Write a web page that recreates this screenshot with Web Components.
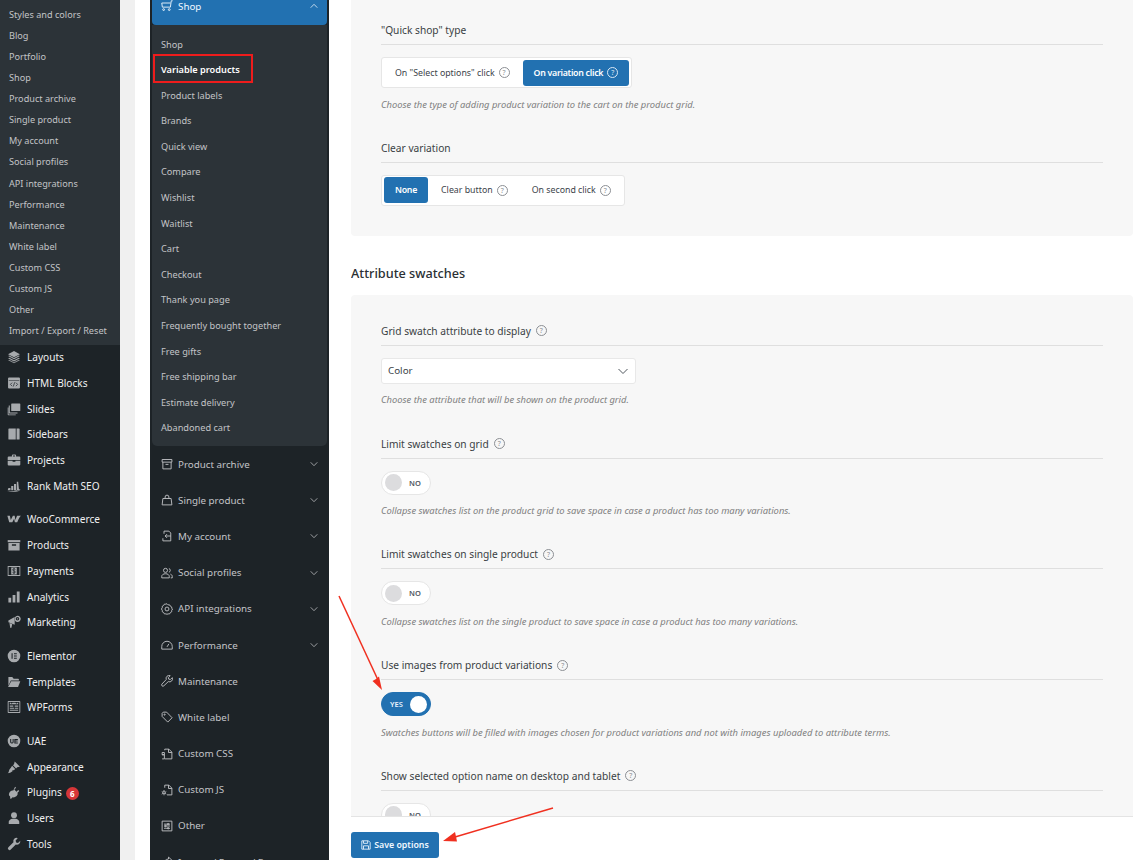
<!DOCTYPE html>
<html lang="en"><head><meta charset="utf-8"><title>Theme settings</title>
<style>
html,body{margin:0;padding:0;height:860px;overflow:hidden;background:#fff}
body{font-family:"Noto Sans","Open Sans",sans-serif;position:relative}
app-shell{height:860px}
</style></head>
<body>
<app-shell>
  <wp-menu slot="menu"></wp-menu>
  <theme-nav slot="nav"></theme-nav>
  <options-main slot="main">
    <opt-panel first>
      <opt-setting label="&quot;Quick shop&quot; type" desc="Choose the type of adding product variation to the cart on the product grid.">
        <seg-group options="On &quot;Select options&quot; click?|*On variation click?"></seg-group>
      </opt-setting>
      <opt-setting label="Clear variation">
        <seg-group options="*None|Clear button?|On second click?"></seg-group>
      </opt-setting>
    </opt-panel>
    <opt-heading>Attribute swatches</opt-heading>
    <opt-panel>
      <opt-setting label="Grid swatch attribute to display" help desc="Choose the attribute that will be shown on the product grid.">
        <opt-select value="Color"></opt-select>
      </opt-setting>
      <opt-setting label="Limit swatches on grid" help desc="Collapse swatches list on the product grid to save space in case a product has too many variations.">
        <opt-toggle></opt-toggle>
      </opt-setting>
      <opt-setting label="Limit swatches on single product" help desc="Collapse swatches list on the single product to save space in case a product has too many variations.">
        <opt-toggle></opt-toggle>
      </opt-setting>
      <opt-setting label="Use images from product variations" help desc="Swatches buttons will be filled with images chosen for product variations and not with images uploaded to attribute terms.">
        <opt-toggle on></opt-toggle>
      </opt-setting>
      <opt-setting label="Show selected option name on desktop and tablet" help>
        <opt-toggle></opt-toggle>
      </opt-setting>
    </opt-panel>
  </options-main>
</app-shell>
<annotation-layer></annotation-layer>
<script>
const def=(name,css,html)=>{customElements.define(name,class extends HTMLElement{
  constructor(){super();this.attachShadow({mode:'open'});}
  connectedCallback(){const h=typeof html==='function'?html(this):html;this.shadowRoot.innerHTML='<style>'+css+'</style>'+h;}
});};
const esc=s=>s.replace(/&/g,'&amp;').replace(/</g,'&lt;').replace(/"/g,'&quot;');

const W={
layouts:'<path d="M10 1.5 18.5 6 10 10.5 1.5 6z"/><path d="M1.5 8.600 3.400 7.700 10 11.300 16.600 7.700 18.500 8.600 10 13.200z"/><path d="M1.500 11.800 3.400 10.900 10 14.500 16.600 10.900 18.500 11.800 10 16.400z"/><path d="M1.500 14.800 3.400 13.900 10 17.500 16.600 13.900 18.500 14.800 10 19z" opacity=".8"/>',
html:'<path fill-rule="evenodd" d="M3 2h14a1.500 1.500 0 0 1 1.500 1.500v13A1.500 1.500 0 0 1 17 18H3a1.500 1.500 0 0 1-1.500-1.500v-13A1.500 1.500 0 0 1 3 2zM2.500 6v.8h15V6z"/><path d="M7.300 9.500 4.800 12l2.500 2.500M12.700 9.500l2.500 2.500-2.500 2.500M11 9l-2 6" fill="none" stroke="#1d2327" stroke-width="1"/>',
slides:'<path d="M7 2h11a1 1 0 0 1 1 1v9a1 1 0 0 1-1 1H7a1 1 0 0 1-1-1V3a1 1 0 0 1 1-1z"/><path d="M4 5v9.500a.5.5 0 0 0 .5.5H15v1.500H3.500A1.500 1.500 0 0 1 2.500 15.500V5z"/><path d="M1 8v10a1 1 0 0 0 1 1h10.500v-1.300H2.300V8z"/>',
sidebars:'<path d="M3 2h9.500v16H3a1 1 0 0 1-1-1V3a1 1 0 0 1 1-1zM13.700 2H17a1 1 0 0 1 1 1v14a1 1 0 0 1-1 1h-3.300z"/>',
projects:'<path fill-rule="evenodd" d="M7 5V3.500A1.500 1.500 0 0 1 8.500 2h3A1.500 1.500 0 0 1 13 3.500V5h4.500A1.500 1.500 0 0 1 19 6.500V10H1V6.500A1.500 1.500 0 0 1 2.500 5zM8.500 3.500V5h3V3.500z"/><path d="M1 11h7v1.500h4V11h7v5.500a1.500 1.500 0 0 1-1.500 1.500h-15A1.500 1.500 0 0 1 1 16.500z"/>',
rank:'<path d="M6 10h3v6H6zM10 7h3v9h-3zM14 4h2l1 10c.5 1 1.500 1.500 2.500 1.500-1 1-3 1-4 .5h-1.500zM2 13h3v3H1z"/><path d="M0 17c4 1 9 .8 14-1 1 .8 3 1 5 .5-4 2-13 2.500-19 .5z"/>',
woo:'<path d="M.5 5.500h3.600l1.300 5.800 3-5.800h2.600l.9 5.800 2.500-5.800h5.500c-1.300 1-3 4-5.300 9h-3.400l-1-5-2.600 5H3.200z"/>',
products:'<path d="M1 3h18v3H1z"/><path fill-rule="evenodd" d="M2 7h16v11H2zM7 9v2h6V9z"/>',
payments:'<path fill-rule="evenodd" d="M1 3h18v14H1zM2.200 4.200v11.600h15.600V4.200z"/><path d="M6 5h8v10H6z"/><path d="M12 7.800c-.5-.6-1.200-.9-2-.9-1.100 0-1.900.6-1.900 1.500 0 2 3.800 1.100 3.800 3 0 .9-.8 1.500-1.900 1.500-.9 0-1.700-.4-2.100-1M10 5.800v8.400" fill="none" stroke="#1d2327" stroke-width="1.100"/>',
analytics:'<path d="M2 11h4v7H2zM8 7h4v11H8zM14 2h4v16h-4z"/>',
marketing:'<path d="M2 8l9-5v11L2 10.500z"/><path d="M3.500 11.500 7.500 13l-1 4.500a1 1 0 0 1-2 0z"/><path fill-rule="evenodd" d="M15 1a4.500 4.500 0 1 1-3.500 7.300V3.200A4.500 4.500 0 0 1 15 1zm0 2a2.500 2.500 0 1 0 0 5 2.500 2.500 0 0 0 0-5z"/><circle cx="15" cy="5.500" r="1"/>',
elementor:'<path fill-rule="evenodd" d="M10 1a9 9 0 1 1 0 18 9 9 0 0 1 0-18zM6.500 6v8h1.500V6zM10 6v1.500h4V6zM10 9.200v1.600h4V9.200zM10 12.500V14h4v-1.500z"/>',
templates:'<path d="M2 3h5.500l2 2.500H16a1 1 0 0 1 1 1V8H5.500L2 15.500z"/><path d="M6 9h13l-3.200 8H1.500z"/>',
wpforms:'<path fill-rule="evenodd" d="M2 1.500h16a1 1 0 0 1 1 1v15a1 1 0 0 1-1 1H2a1 1 0 0 1-1-1v-15a1 1 0 0 1 1-1zM2.300 2.800v14.400h15.400V2.800z"/><path d="M4 4h1.500l1 1.500L8 4h4l1.500 1.500L15 4h1v2H4zM4 8h5v1.500H4zM4 11h6v1.500H4zM11 8h5v1.500h-5zM11 11h5v1.500h-5zM4 14h12v1.500H4z"/>',
uae:'<path fill-rule="evenodd" d="M10 1a9 9 0 1 1 0 18 9 9 0 0 1 0-18zM4.500 7v4.500a2 2 0 0 0 2 2h1a2 2 0 0 0 2-2V7H8v4.500a.6.6 0 0 1-.6.6h-.8a.6.6 0 0 1-.6-.6V7zM10.500 7v6.500h5V12h-3.500v-1.300h3.200V9.300H12V8.500h3.500V7z"/>',
appearance:'<path d="M11 2l7.500 7.500-4 1-1.500 1.500-4.500-4.500 1.500-1.500zM7.300 8.300l4.400 4.400-2 2-1.700-.5-.2 2-3.300 2L1 19c2-1.500 1.500-4 2.500-5.500L5.500 11z"/>',
plugins:'<path d="M11.500 2.500 13 4l-2.500 2.500 3 3L16 7l1.500 1.500-2.500 2.500c.7 2-.2 3.800-1.700 5.200-1.700 1.500-3.800 1.800-5.300 1.300L5.500 20l-1-1v-2.500L3 15c-.5-1.600-.2-3.600 1.300-5.300C5.700 8.200 7.500 7.300 9 8z"/>',
users:'<circle cx="10" cy="6" r="4.200"/><path d="M2.500 18.500v-3c0-2.500 3-4.500 5-4.500h5c2 0 5 2 5 4.500v3z"/>',
tools:'<path d="M14 1a5 5 0 0 0-4.800 6.400L2 14.600a2.400 2.400 0 0 0 3.400 3.400l7.200-7.200A5 5 0 0 0 19 5.500l-3.300 3-2.700-.7-.7-2.700 3-3.300A5 5 0 0 0 14 1z"/>'
};
const wpItems=[['layouts','Layouts'],['html','HTML Blocks'],['slides','Slides'],['sidebars','Sidebars'],['projects','Projects'],['rank','Rank Math SEO'],0,
['woo','WooCommerce'],['products','Products'],['payments','Payments'],['analytics','Analytics'],['marketing','Marketing'],0,
['elementor','Elementor'],['templates','Templates'],['wpforms','WPForms'],0,
['uae','UAE'],['appearance','Appearance'],['plugins','Plugins',6],['users','Users'],['tools','Tools']];
const wpSub=['Styles and colors','Blog','Portfolio','Shop','Product archive','Single product','My account','Social profiles','API integrations','Performance','Maintenance','White label','Custom CSS','Custom JS','Other','Import / Export / Reset'];

customElements.define('app-shell',class extends HTMLElement{
  constructor(){super();this.attachShadow({mode:'open'}).innerHTML=`<style>
  :host{display:grid;grid-template-columns:120px 15px 15px 179px 22px 782px 15px;width:1148px;overflow:hidden}
  .gray{background:#f0f0f0}
  ::slotted([slot=menu]){grid-column:1}
  ::slotted([slot=nav]){grid-column:4}
  ::slotted([slot=main]){grid-column:6}
  </style><slot name="menu"></slot><div class="gray" style="grid-column:2;grid-row:1"></div><slot name="nav"></slot><slot name="main"></slot>`;}
});

def('wp-menu',`
  :host{display:block;grid-row:1;background:#1d2327;height:860px;overflow:hidden;font-size:10.100px}
  .sub{background:#2c3338;padding:3.500px 0;height:338px;color:#c3c4c7;font-size:9.150px;box-sizing:content-box}
  .sub div{height:21.130px;line-height:21.130px;padding-left:9px;white-space:nowrap}
  .wrap{margin-top:-.5px}
  .it{height:25.700px;display:flex;align-items:center;color:#f0f0f1;white-space:nowrap}
  .it svg{width:14px;height:14px;margin-left:6.500px;margin-right:6.500px;fill:#a7aaad;flex:none}
  .sep{height:8px}
  .b{display:inline-flex;width:13px;height:13px;border-radius:50%;background:#d63638;color:#fff;font-size:8px;font-weight:700;align-items:center;justify-content:center;margin-left:4px;position:relative;top:1px}
`,()=>`<div class="sub">${wpSub.map(s=>`<div>${s}</div>`).join('')}</div><div class="wrap">`+
 wpItems.map(i=>i?`<div class="it"><svg viewBox="0 0 20 20">${W[i[0]]}</svg><span>${i[1]}</span>${i[2]?`<span class="b">${i[2]}</span>`:''}</div>`:'<div class="sep"></div>').join('')+'</div>');

const N={
cart:'<path d="M15.500 1h-1.800l-1.200 8.500H1.800L1 4h11.700"/><circle cx="3.500" cy="12.800" r="1.200"/><circle cx="11" cy="12.800" r="1.200"/>',
archive:'<path d="M1.500 2h13v3.500h-13zM2.500 5.500V14.500h11V5.500M6 8.500h4"/>',
bag:'<path d="M2.500 6h11l1 8.500h-13zM5.500 6V4a2.500 2.500 0 0 1 5 0v2"/>',
account:'<path d="M4 5V1.500h6.500L13 4v10.500H2.500V11M13 8H5.500M8 5.500 5.500 8 8 10.500"/>',
social:'<circle cx="6" cy="4.500" r="2.700"/><path d="M1 14.500v-2c0-2 2-3.500 5-3.500s5 1.500 5 3.500v2zM10.500 2a2.600 2.600 0 0 1 0 5M12.500 9.500c1.500.5 2.500 1.500 2.500 3v2h-2"/>',
api:'<path d="M8 1l1.500 1.500h2l1 1.800 1.800 1v2L15.500 8 14.300 9.700v2l-1.800 1-1 1.800h-2L8 15l-1.500-.5h-2l-1-1.800-1.800-1v-2L.5 8l1.200-1.700v-2l1.800-1 1-1.800h2z"/><circle cx="8" cy="8" r="2.600"/>',
perf:'<path d="M1 13.500V10a7 7 0 0 1 14 0v3.500zM8 10.500 10.500 6.500"/>',
wrench:'<path d="M15 3.500 12.500 6l-2.200-.5L9.800 3.300 12.300.9A4 4 0 0 0 7 6L1.300 12a1.600 1.600 0 0 0 2.500 2.400L9.700 8.800A4 4 0 0 0 15 3.500z"/>',
tag:'<path d="M1.500 3 3 1.500h4.500L14.800 9 9 14.800 1.500 7.300z"/><circle cx="4.800" cy="4.800" r=".8"/>',
css:'<path d="M5 3V1.500h5.500L14.500 5.500V14.500H5M10 1.500V6h4.500M1.500 6h3v3h-3zM1.500 9h3v5.500h-3"/>',
js:'<path d="M5 5V1.500h5.500L14.500 5.500V14.500H8M10 1.500V6h4.500"/><circle cx="4" cy="11.500" r="1.500"/><path d="M4 8v1.500M4 13.500v1.500M1 10l1.500 1M5.500 12.500 7 13.500M7 10l-1.500 1M2.500 12.500 1 13.500"/>',
other:'<path d="M1.500 1.500h13v13h-13zM4 5.500h8M4 8h8M4 11h8"/><circle cx="9.500" cy="5.500" r="1"/><circle cx="6" cy="8" r="1"/><circle cx="9.500" cy="11" r="1"/>',
io:'<path d="M2 14.500v-5h3M10 1.500l4.500 4L10 9.500V7C6 7 4.500 9 4 11.500 4 7 6 4 10 4z"/>'
};
const navSub=['Shop','*Variable products','Product labels','Brands','Quick view','Compare','Wishlist','Waitlist','Cart','Checkout','Thank you page','Frequently bought together','Free gifts','Free shipping bar','Estimate delivery','Abandoned cart'];
const navItems=[['archive','Product archive',1],['bag','Single product',1],['account','My account',1],['social','Social profiles',1],['api','API integrations',1],['perf','Performance',1],['wrench','Maintenance'],['tag','White label'],['css','Custom CSS'],['js','Custom JS'],['other','Other'],['io','Import / Export / Reset']];
const chev=(up)=>`<svg class="ch" viewBox="0 0 8 8"><path d="${up?'M.7 5.700 4 2.300l3.300 3.400':'M.7 2.300 4 5.700l3.300-3.400'}"/></svg>`;

def('theme-nav',`
  :host{display:block;grid-row:1;background:#1d2327;height:860px;overflow:hidden;color:#c3c4c7;font-size:9.800px;padding:0 2px;box-sizing:border-box}
  svg{flex:none;fill:none;stroke:currentColor;stroke-width:1.200}
  .ic{width:12px;height:12px;margin-right:5px}
  .ch{width:8px;height:8px;margin-left:auto;stroke-width:.9;opacity:.85}
  .top,.it{display:flex;align-items:center;padding:0 9px 0 9px;white-space:nowrap}
  .top{height:12px;background:#2271b1;color:#f0f8ff;border-radius:0 0 4px 4px;padding-bottom:13px;box-sizing:content-box}
  .sub{background:#2c3338;border-radius:0 0 5px 5px;height:421px;padding:6.500px 0 4.900px;box-sizing:border-box;font-size:9.200px}
  .sub div{height:25.600px;line-height:25.600px;padding-left:9px;white-space:nowrap}
  .sub .a{color:#fff;font-weight:600}
  .it{height:36.200px}
`,()=>`<div class="top"><svg class="ic" viewBox="0 0 16 16">${N.cart}</svg><span>Shop</span>${chev(1)}</div>
 <div class="sub">${navSub.map(s=>s[0]=='*'?`<div class="a">${s.slice(1)}</div>`:`<div>${s}</div>`).join('')}</div>`+
 navItems.map(i=>`<div class="it"><svg class="ic" viewBox="0 0 16 16">${N[i[0]]}</svg><span>${i[1]}</span>${i[2]?chev(0):''}</div>`).join(''));

def('options-main',`
  :host{display:flex;flex-direction:column;grid-row:1;height:860px;overflow:hidden;background:#fff}
  .scroll{flex:1;min-height:0;overflow:hidden}
  .bar{flex:none;border-top:1px solid #e4e4e4;padding-top:15px;height:28px;background:#fff}
  button{display:flex;align-items:center;gap:3px;height:26px;width:88px;justify-content:center;background:#2271b1;color:#f0f8ff;border:0;border-radius:3px;font:600 8.800px "Noto Sans","Open Sans",sans-serif;padding:0}
  svg{width:10px;height:10px;fill:none;stroke:#d5e6f5;stroke-width:1.200}
`,`<div class="scroll"><slot></slot></div><div class="bar"><button><svg viewBox="0 0 12 12"><path d="M1 1h8l2 2v8H1zM3 1v3h5V1M3 11V7h6v4"/></svg>Save options</button></div>`);

def('opt-panel',`
  :host{display:block;background:#f7f7f7;border-radius:4px;padding:26px 30px 30px;color:#3c434a}
  :host([first]){padding-top:20px;border-radius:0 0 4px 4px}
`,`<slot></slot>`);

def('opt-heading',`
  :host{display:block;height:59px;padding-top:26px;box-sizing:border-box;font-size:12.700px;font-weight:500;color:#2a2f33;line-height:22px}
`,`<slot></slot>`);

const help=`<span class="h">?</span>`;
const helpCss=`.h{display:inline-flex;width:9px;height:9px;border:1px solid #8c8f94;border-radius:50%;color:#8c8f94;font-size:7px;font-weight:400;align-items:center;justify-content:center;line-height:1;flex:none;box-sizing:content-box;letter-spacing:0}`;

def('opt-setting',`
  :host{display:block;margin-bottom:25.750px}
  :host(:last-child){margin-bottom:0}
  .l{height:24px;line-height:20px;font-size:10.200px;color:#3a3f44;border-bottom:1px solid #dfdfdf;display:flex;align-items:flex-start;gap:5px;margin-bottom:12px}
  .d{margin-top:8.500px;height:15.500px;line-height:16px;font-size:9.400px;font-style:italic;font-weight:400;color:#808080;white-space:nowrap}
  ${helpCss}
  .h{margin-top:4.500px}
`,el=>`<div class="l"><span>${esc(el.getAttribute('label'))}</span>${el.hasAttribute('help')?help:''}</div><slot></slot>${el.hasAttribute('desc')?`<div class="d">${esc(el.getAttribute('desc'))}</div>`:''}`);

def('seg-group',`
  :host{display:inline-flex;gap:2px;background:#fff;border:1px solid #e6e6e6;border-radius:3px;padding:0 2px;height:31px;align-items:center;box-sizing:border-box;vertical-align:top;font-size:8.800px;color:#3c434a}
  div{display:flex;align-items:center;gap:4px;height:26px;padding:0 11px;border-radius:3px;white-space:nowrap}
  .a{background:#2271b1;color:#fff;font-weight:600}
  .a span:first-child{letter-spacing:-.28px}
  .a .h{border-color:#d9e8f5;color:#d9e8f5}
  ${helpCss}
`,el=>el.getAttribute('options').split('|').map(o=>{const a=o[0]=='*';let t=a?o.slice(1):o;const q=t.endsWith('?');if(q)t=t.slice(0,-1);return `<div class="${a?'a':''}"><span>${esc(t)}</span>${q?help:''}</div>`}).join(''));

def('opt-select',`
  :host{display:flex;width:255px;height:26px;background:#fff;border:1px solid #e8e8e8;border-radius:3px;box-sizing:border-box;align-items:center;padding:0 6px;font-size:9.800px;color:#3c434a}
  svg{margin-left:auto;width:12px;height:12px;fill:none;stroke:#50575e;stroke-width:1}
`,el=>`<span>${el.getAttribute('value')}</span><svg viewBox="0 0 12 12"><path d="M1.500 4 6 8.500 10.500 4"/></svg>`);

def('opt-toggle',`
  :host{display:flex;width:50px;height:24px;border-radius:12px;background:#fff;border:1px solid #e6e6e6;box-sizing:border-box;align-items:center;font-size:7.500px;font-weight:600;color:#50575e;padding:0 3px;gap:7px}
  i{display:block;width:17px;height:17px;border-radius:50%;background:#dcdcde;flex:none}
  :host([on]){background:#2271b1;border-color:#2271b1;color:#e8f2fb;flex-direction:row-reverse;padding:0 3px 0 8px;justify-content:space-between}
  :host([on]) i{background:#fff}
`,el=>`<i></i><span>${el.hasAttribute('on')?'YES':'NO'}</span>`);

def('annotation-layer',`
  :host{position:absolute;left:0;top:0;width:1148px;height:860px;pointer-events:none;display:block}
  svg{position:absolute;left:0;top:0;width:1148px;height:860px}
`,`<svg viewBox="0 0 1148 860">
  <rect x="154" y="55" width="98" height="27" fill="none" stroke="#ee1c1c" stroke-width="2"/>
  <path d="M339 596 378 680" fill="none" stroke="#f03020" stroke-width="1.500"/>
  <path d="M382 690 372.500 681 376 679 379 676.500z" fill="#f03020"/>
  <path d="M553 808 455 837" fill="none" stroke="#f03020" stroke-width="1.500"/>
  <path d="M443 841 455 832 456 836.500 457 841.500z" fill="#f03020"/>
</svg>`);
</script>
</body></html>
